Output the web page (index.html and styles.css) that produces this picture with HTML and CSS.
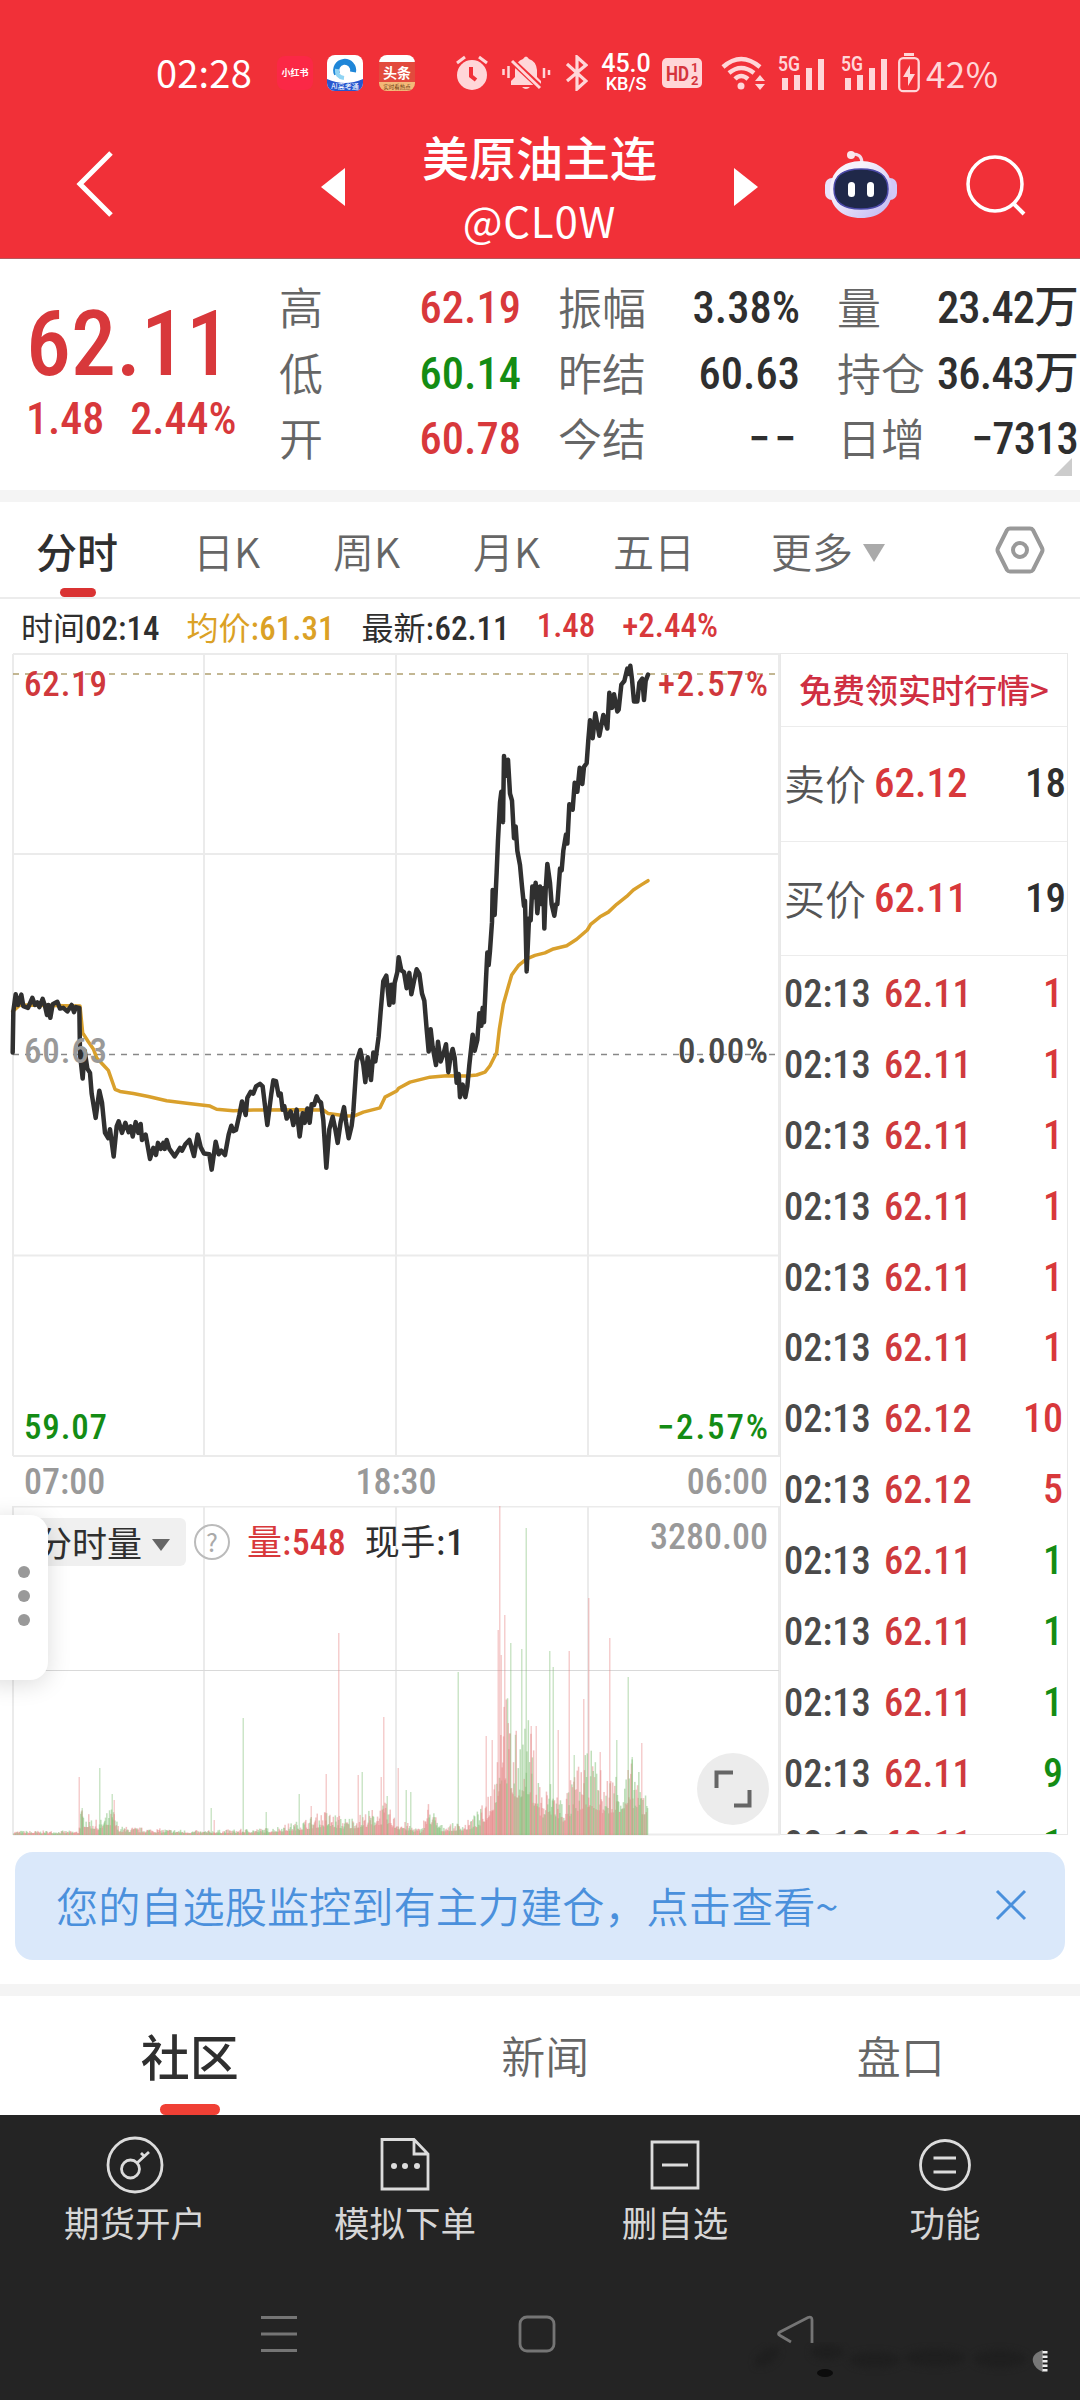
FILE: index.html
```html
<!DOCTYPE html>
<html lang="zh-CN">

<head>
    <meta charset="utf-8" />
    <meta name="viewport" content="width=device-width, initial-scale=1" />
    <title>美原油主连</title>
    <link rel="stylesheet" href="styles.css">
</head>

<body>
    <header class="top">
        <div class="status">
            <span class="clock">02:28</span>
            <span class="app app-xhs">小红书</span>
            <svg class="app-qq" width="36" height="36" viewBox="0 0 36 36">
                <clipPath id="r"><rect width="36" height="36" rx="8" /></clipPath>
                <g clip-path="url(#r)">
                    <rect width="36" height="36" fill="#fff" />
                    <path d="M0 24Q18 32 36 24V36H0Z" fill="#2757cf" />
                    <path d="M10 19A8.500 8.500 0 1 1 26 17" fill="none" stroke="#1f86d8" stroke-width="6" />
                    <path d="M10 14Q9 22 17 23" fill="none" stroke="#8fd4f4" stroke-width="4" />
                    <text x="18" y="34" font-size="7" fill="#fff" text-anchor="middle">AI高考通</text>
                </g>
            </svg>
            <svg class="app-tt" width="36" height="36" viewBox="0 0 36 36">
                <g clip-path="url(#r)">
                    <rect width="36" height="36" fill="#e24a3d" />
                    <rect width="36" height="7" fill="#fff" />
                    <rect y="27" width="36" height="9" fill="#f3b978" />
                    <text x="18" y="23" font-size="14" font-weight="700" fill="#fff" text-anchor="middle">头条</text>
                    <text x="18" y="34" font-size="5.500" fill="#6b3a12" text-anchor="middle">实时看热点</text>
                </g>
            </svg>
            <svg class="alarm" width="32" height="36" viewBox="0 0 32 36">
                <circle cx="16" cy="20" r="15" fill="#ffd6d8" />
                <path d="M1 8L9 2M31 8L23 2" stroke="#ffd6d8" stroke-width="3" />
                <path d="M15 12V21L20 25" fill="none" stroke="#f13038" stroke-width="4" />
            </svg>
            <svg class="bell" width="49" height="36" viewBox="0 0 49 36">
                <path d="M9 30V26L13 22V15Q14 6 21 4Q24 -1 27 4Q34 6 35 15V22L39 26V30ZM20 32H28Q24 36 20 32Z" fill="#ffd6d8" />
                <path d="M9 5L40 34" stroke="#f13038" stroke-width="6" />
                <path d="M10 6L38 33" stroke="#ffd6d8" stroke-width="3" />
                <path d="M1.500 14V20M6.500 11V23M42 13V23M47 15V20" stroke="#ffd6d8" stroke-width="2.500" />
            </svg>
            <svg class="bt" width="22" height="36" viewBox="0 0 22 36">
                <path d="M1 9L20 26L11 34V2L20 10L1 26" fill="none" stroke="#ffd6d8" stroke-width="3.200" />
            </svg>
            <span class="speed"><b>45.0</b><i>KB/S</i></span>
            <svg class="hd" width="40" height="30" viewBox="0 0 40 30">
                <rect width="40" height="30" rx="5" fill="#ffd6d8" />
                <text x="4" y="23" font-size="21" font-weight="700" textLength="23" lengthAdjust="spacingAndGlyphs">HD</text>
                <text x="29" y="14" font-size="13" font-weight="700">1</text>
                <text x="29" y="27" font-size="13" font-weight="700">2</text>
            </svg>
            <svg class="wifi" width="44" height="36" viewBox="0 0 44 36">
                <g fill="none" stroke="#ffd6d8" stroke-width="4.500">
                    <path d="M2 12Q20 -4 39 12" />
                    <path d="M8 18Q20 8 33 18" />
                    <path d="M14 24Q20 18 27 24" />
                </g>
                <circle cx="20" cy="31" r="3.500" fill="#ffd6d8" />
                <path d="M34 26L39 20L44 26ZM34 29L39 35L44 29Z" fill="#ffd6d8" />
            </svg>
            <svg class="sig" width="46" height="40" viewBox="0 -4 46 40">
                <text x="0" y="16" font-size="20" font-weight="600" fill="#ffd6d8" textLength="22" lengthAdjust="spacingAndGlyphs">5G</text>
                <path d="M4 23h6v12h-6zM16 20h6v15h-6zM28 13h6v22h-6zM40 4h6v31h-6z" fill="#ffd6d8" />
            </svg>
            <svg class="sig sig-b" width="46" height="40" viewBox="0 -4 46 40">
                <text x="0" y="16" font-size="20" font-weight="600" fill="#ffd6d8" textLength="22" lengthAdjust="spacingAndGlyphs">5G</text>
                <path d="M4 23h6v12h-6zM16 20h6v15h-6zM28 13h6v22h-6zM40 4h6v31h-6z" fill="#ffd6d8" />
            </svg>
            <svg class="batt" width="22" height="40" viewBox="0 0 22 40">
                <path d="M6 1.500H16" stroke="#ffd6d8" stroke-width="3" />
                <rect x="1.200" y="5.200" width="19.500" height="33" rx="4" fill="none" stroke="#ffd6d8" stroke-width="2.300" />
                <path d="M12 12L5 24H10V33L17 21H12Z" fill="#ffd6d8" />
            </svg>
            <span class="pct">42%</span>
        </div>
        <div class="titlebar">
            <svg class="back" width="38" height="66" viewBox="0 0 38 66">
                <path d="M35 2L4 33L35 64" fill="none" stroke="#fff" stroke-width="5" />
            </svg>
            <svg class="prev" width="24" height="38" viewBox="0 0 24 38"><path d="M24 0V38L0 19Z" fill="#fff" /></svg>
            <div class="title">
                <h1>美原油主连</h1>
                <span>@CL0W</span>
            </div>
            <svg class="next" width="24" height="38" viewBox="0 0 24 38"><path d="M0 0V38L24 19Z" fill="#fff" /></svg>
            <svg class="robot" width="72" height="68" viewBox="0 0 72 68">
                <linearGradient id="hd" x1="0" y1="0" x2="1" y2="1">
                    <stop offset=".3" stop-color="#f6f2fc" />
                    <stop offset="1" stop-color="#bdb4f2" />
                </linearGradient>
                <path d="M26 4Q37 3 37 13" fill="none" stroke="#f3dcea" stroke-width="3" />
                <circle cx="26" cy="5" r="4" fill="#fbe6ec" />
                <rect x="0" y="28" width="14" height="22" rx="7" fill="#e9e2fa" />
                <rect x="58" y="28" width="14" height="22" rx="7" fill="#d2c9f7" />
                <path d="M36 11C54 11 67 22 67 40C67 58 54 68 36 68C18 68 5 58 5 40C5 22 18 11 36 11Z" fill="url(#hd)" />
                <path d="M36 19C54 19 63 25 63 39C63 53 54 59 36 59C18 59 9 53 9 39C9 25 18 19 36 19Z" fill="#1f2849" stroke="#4b49a8" stroke-width="1.500" />
                <rect x="23" y="32" width="7" height="15" rx="3.500" fill="#fff" />
                <rect x="42" y="32" width="7" height="15" rx="3.500" fill="#fff" />
            </svg>
            <svg class="search" width="62" height="62" viewBox="0 0 62 62">
                <circle cx="29" cy="29" r="27" fill="none" stroke="#fff" stroke-width="3.500" />
                <path d="M48 49L58 59" stroke="#fff" stroke-width="4" />
            </svg>
        </div>
    </header>

    <section class="quote">
        <div class="last red">
            <div class="price num">62.11</div>
            <div class="chg"><span class="num">1.48</span><span class="num">2.44%</span></div>
        </div>
        <dl class="col">
            <dt>高</dt><dd class="num red">62.19</dd>
            <dt>低</dt><dd class="num green">60.14</dd>
            <dt>开</dt><dd class="num red">60.78</dd>
        </dl>
        <dl class="col">
            <dt>振幅</dt><dd class="num">3.38%</dd>
            <dt>昨结</dt><dd class="num">60.63</dd>
            <dt>今结</dt><dd class="num dash">−−</dd>
        </dl>
        <dl class="col">
            <dt>量</dt><dd class="num">23.42万</dd>
            <dt>持仓</dt><dd class="num">36.43万</dd>
            <dt>日增</dt><dd class="num">−7313</dd>
        </dl>
        <i class="corner"></i>
    </section>

    <nav class="periods">
        <a class="on">分时</a>
        <a>日K</a>
        <a>周K</a>
        <a>月K</a>
        <a>五日</a>
        <a>更多<i class="caret"></i></a>
        <svg width="50" height="48" viewBox="0 0 50 48">
            <path d="M15 2.500H35Q37 2.500 38 4L47 22Q48 24 47 26L38 44Q37 45.500 35 45.500H15Q13 45.500 12 44L3 26Q2 24 3 22L12 4Q13 2.500 15 2.500Z" fill="none" stroke="#999" stroke-width="4" />
            <circle cx="25" cy="24" r="7" fill="none" stroke="#999" stroke-width="4" />
        </svg>
    </nav>

    <div class="info">
        <span>时间<b class="num">02:14</b></span>
        <span class="gold">均价:<b class="num">61.31</b></span>
        <span>最新:<b class="num">62.11</b></span>
        <span class="red num">1.48</span>
        <span class="red num">+2.44%</span>
    </div>

    <main class="board">
        <div class="charts">
            <svg class="chart" width="780" height="804" viewBox="0 653 780 804">
                <path class="grid" d="M13 654H780M13 854H780M13 1255.500H780M13 1456H780M13 654V1456M204 654V1456M396 654V1456M588 654V1456M779 654V1456" />
                <path class="dashed top-line" d="M13 674H776" />
                <path class="dashed" d="M13 1054.500H776" />
                <g transform="translate(0 640) scale(.33333 .35714)">
                    <polyline id="avg" class="avg" />
                    <polyline id="line" class="line" />
                </g>
                <g class="labels">
                    <text class="red" x="24" y="696" textLength="83">62.19</text>
                    <text class="red" x="658" y="696" textLength="110">+2.57%</text>
                    <text class="gray" x="24" y="1063" textLength="83">60.63</text>
                    <text class="mid" x="678" y="1063" textLength="90">0.00%</text>
                    <text class="green" x="24" y="1439" textLength="83">59.07</text>
                    <text class="green" x="657" y="1439" textLength="111">−2.57%</text>
                </g>
            </svg>
            <div class="axis num"><span>07:00</span><span>18:30</span><span>06:00</span></div>
            <div class="volume">
                <svg width="780" height="330" viewBox="0 1506 780 330">
                    <path class="grid" d="M13 1506.500H780M13 1834.500H780M13 1506V1835M204 1506V1835M396 1506V1835M588 1506V1835M779 1506V1835" />
                    <path d="M13 1670.500H779" stroke="#d9d9d9" />
                    <g id="bars"></g>
                </svg>
                <div class="vol-head">
                    <span class="pick">分时量<i class="caret"></i></span>
                    <span class="help">?</span>
                    <span class="red">量:<b class="num">548</b></span>
                    <span class="hand">现手:<b class="num">1</b></span>
                    <span class="max num">3280.00</span>
                </div>
                <span class="full">
                    <svg width="38" height="38" viewBox="0 0 38 38"><path d="M19 2.500H2.500V18M35.500 20V35.500H20" fill="none" stroke="#666" stroke-width="4" /></svg>
                </span>
            </div>
        </div>
        <aside class="ticks">
            <div class="free">免费领实时行情&gt;</div>
            <div class="bid"><span>卖价</span><b class="num red">62.12</b><b class="num qty">18</b></div>
            <div class="bid"><span>买价</span><b class="num red">62.11</b><b class="num qty">19</b></div>
            <ul class="num">
                <li><span>02:13</span><b>62.11</b><em class="red">1</em></li>
                <li><span>02:13</span><b>62.11</b><em class="red">1</em></li>
                <li><span>02:13</span><b>62.11</b><em class="red">1</em></li>
                <li><span>02:13</span><b>62.11</b><em class="red">1</em></li>
                <li><span>02:13</span><b>62.11</b><em class="red">1</em></li>
                <li><span>02:13</span><b>62.11</b><em class="red">1</em></li>
                <li><span>02:13</span><b>62.12</b><em class="red">10</em></li>
                <li><span>02:13</span><b>62.12</b><em class="red">5</em></li>
                <li><span>02:13</span><b>62.11</b><em class="green">1</em></li>
                <li><span>02:13</span><b>62.11</b><em class="green">1</em></li>
                <li><span>02:13</span><b>62.11</b><em class="green">1</em></li>
                <li><span>02:13</span><b>62.11</b><em class="green">9</em></li>
                <li><span>02:13</span><b>62.11</b><em class="green">1</em></li>
            </ul>
        </aside>
        <div class="drawer"><i></i><i></i><i></i></div>
    </main>

    <div class="banner">
        <span>您的自选股监控到有主力建仓，点击查看~</span>
        <svg width="32" height="32" viewBox="0 0 32 32"><path d="M2 2L30 30M30 2L2 30" stroke="#4a90dc" stroke-width="3" /></svg>
    </div>

    <nav class="sections">
        <a class="on">社区</a>
        <a>新闻</a>
        <a>盘口</a>
    </nav>

    <footer class="bottom">
        <div class="actions">
            <a>
                <svg width="58" height="58" viewBox="0 0 58 58">
                    <circle cx="29" cy="29" r="27" />
                    <circle cx="24.500" cy="33" r="9" />
                    <path d="M31 27L43 16M35 17L39 21" />
                </svg>
                期货开户
            </a>
            <a>
                <svg width="58" height="58" viewBox="0 0 58 58">
                    <path d="M6 3.500H38L52 18V53H6ZM38 3.500V18H52" />
                    <circle class="dot" cx="18" cy="30" r="3" />
                    <circle class="dot" cx="29" cy="30" r="3" />
                    <circle class="dot" cx="41" cy="30" r="3" />
                </svg>
                模拟下单
            </a>
            <a>
                <svg width="58" height="58" viewBox="0 0 58 58"><path d="M6 6H52V52H6ZM16 29H42" /></svg>
                删自选
            </a>
            <a>
                <svg width="58" height="58" viewBox="0 0 58 58">
                    <circle cx="29" cy="29" r="24.500" />
                    <path d="M17.500 22H40M17.500 36H40" />
                </svg>
                功能
            </a>
        </div>
        <div class="sysnav">
            <svg width="38" height="38" viewBox="0 0 38 38"><path d="M1 2.500H37M1 19H37M1 35.500H37" /></svg>
            <svg width="38" height="38" viewBox="0 0 38 38"><rect x="2" y="2" width="34" height="34" rx="7" /></svg>
            <svg width="38" height="38" viewBox="0 0 38 38"><path d="M15 27L4 20.500Q1 19 4 17L32 2.500Q36 1 36 5V28" /></svg>
        </div>
        <svg class="smudge" width="312" height="36" viewBox="0 0 312 36">
            <g class="haze">
                <ellipse cx="22" cy="15" rx="14" ry="7" transform="rotate(-35 22 15)" />
                <ellipse cx="82" cy="10" rx="16" ry="8" />
                <ellipse cx="130" cy="18" rx="26" ry="8" />
                <ellipse cx="190" cy="16" rx="30" ry="9" />
                <ellipse cx="255" cy="17" rx="26" ry="9" />
            </g>
            <ellipse cx="80" cy="31" rx="8" ry="4" fill="#0c0c0c" />
            <path d="M298 8Q286 12 288 20Q290 27 298 30Z" fill="#777" />
            <path d="M300 9V30" stroke="#eee" stroke-width="5" stroke-dasharray="2.500 2" />
        </svg>
    </footer>
    <script src="chart.js"></script>
</body>

</html>
```
FILE: styles.css
```css
* {
    box-sizing: border-box;
}

body {
    margin: 0;
    width: 1080px;
    height: 2400px;
    overflow: hidden;
    background: #fff;
    color: #2f2f2f;
    font-family: "Noto Sans CJK SC", sans-serif;
}

svg {
    display: block;
    flex: none;
}

b, i, em {
    font-weight: inherit;
    font-style: normal;
}

.num {
    font-family: "Roboto Condensed", Roboto, "Noto Sans CJK SC", sans-serif;
    font-weight: 500;
    font-stretch: 75%;
}

.red { color: #d8383b; fill: #d0383c; }
.green { color: #148c14; fill: #148c14; }
.gold { color: #dba125; }

/* header */
.top {
    height: 259px;
    background: #f13038;
    border-bottom: 1px solid #b5595d;
    color: #fff;
}

.status {
    display: flex;
    align-items: center;
    height: 146px;
    padding-left: 156px;
}

.clock {
    width: 121px;
    margin-top: -4px;
    font-size: 38px;
    font-weight: 400;
    letter-spacing: .2px;
    white-space: nowrap;
}

.app-xhs {
    width: 36px;
    height: 34px;
    border-radius: 8px;
    background: #fb2846;
    font-size: 9px;
    font-weight: 700;
    line-height: 34px;
    text-align: center;
}

.app-qq { margin-left: 14px; }
.app-tt { margin-left: 16px; }
.alarm { margin-left: 41px; }
.bell { margin-left: 14px; }
.bt { margin-left: 15px; }

.speed {
    width: 52px;
    margin-left: 12px;
    font-family: Roboto, sans-serif;
    text-align: center;
}

.speed b, .speed i {
    display: block;
    font-size: 25px;
    font-weight: 500;
    line-height: 22px;
}

.speed i {
    font-size: 18px;
    line-height: 18px;
}

.hd { margin-left: 10px; fill: #d5343c; font-family: Roboto, sans-serif; }
.wifi { margin-left: 19px; }
.sig { margin: -4px 0 0 13px; font-family: Roboto, sans-serif; }
.sig-b { margin-left: 17px; }
.batt { margin-left: 11px; }

.pct {
    margin-left: 6px;
    margin-top: -2px;
    font-size: 35px;
    letter-spacing: .4px;
    color: #ffd6d8;
}

.titlebar {
    display: flex;
    align-items: center;
    height: 76px;
    padding-left: 76px;
}

.prev { margin-left: 207px; margin-top: 5px; }

.title {
    width: 389px;
    padding-top: 9px;
    text-align: center;
}

.title h1 {
    margin: 0;
    font-size: 47px;
    font-weight: 500;
    line-height: 62px;
}

.title span {
    display: block;
    font-size: 42px;
    line-height: 66px;
    letter-spacing: .8px;
}

.next { margin-top: 5px; }
.robot { margin-left: 67px; }
.search { margin: 3px 0 0 69px; }

/* quote */
.quote {
    position: relative;
    display: grid;
    grid-template-columns: 216px 242px 242px 241px;
    column-gap: 37px;
    height: 243px;
    padding-left: 26px;
    border-bottom: 12px solid #f4f4f4;
}

.last {
    padding-top: 36px;
}

.price {
    height: 95px;
    font-size: 90px;
    line-height: 100px;
}

.chg {
    display: flex;
    gap: 26px;
    font-size: 44px;
    line-height: 58px;
}

.col {
    display: grid;
    grid-template-columns: auto 1fr;
    grid-auto-rows: 65.500px;
    margin: 17px 0 0;
}

.col dt {
    font-size: 44px;
    line-height: 60px;
    color: #666;
    font-weight: 350;
}

.col dd {
    margin: 0;
    font-size: 44.500px;
    line-height: 65px;
    text-align: right;
    white-space: nowrap;
}

.col:nth-child(4) dd { letter-spacing: -.8px; }
.col .dash { letter-spacing: 4px; }

.corner {
    position: absolute;
    right: 8px;
    bottom: 14px;
    border: solid transparent;
    border-width: 0 0 18px 18px;
    border-bottom-color: #ccc;
}

/* period tabs */
.periods {
    display: flex;
    align-items: center;
    height: 97px;
    padding-left: 36px;
    border-bottom: 2px solid #ececec;
    font-size: 41px;
    font-weight: 350;
    color: #666;
}

.periods a {
    position: relative;
    width: 140px;
    line-height: 90px;
    white-space: nowrap;
}

.periods a.on {
    width: 157px;
    color: #2f2f2f;
    font-weight: 500;
}

.periods a:nth-child(6) { width: 242px; padding-left: 18px; }

.periods a.on::after {
    content: "";
    position: absolute;
    left: 24px;
    bottom: -2px;
    width: 36px;
    height: 9px;
    border-radius: 5px;
    background: #da3333;
}

.caret {
    display: inline-block;
    margin-left: 10px;
    border: 11px solid transparent;
    border-width: 18px 11px 0;
    border-top-color: #aaa;
    vertical-align: 6px;
}

/* info line */
.info {
    display: flex;
    height: 54px;
    padding-left: 21px;
    font-size: 32px;
    line-height: 54px;
    white-space: nowrap;
}

.info span { margin-right: 27px; }
.info .num { font-size: 33px; }

/* charts */
.board {
    position: relative;
    display: flex;
    height: 1183px;
}

.charts { width: 780px; }

.grid { fill: none; stroke: #ebebeb; stroke-width: 2; }
.dashed { fill: none; stroke: #888; stroke-width: 1.600; stroke-dasharray: 6 6; }
.top-line { stroke: #b0a070; }

.line, .avg {
    fill: none;
    stroke: #303030;
    stroke-width: 4.500;
    stroke-linejoin: round;
    stroke-linecap: round;
    vector-effect: non-scaling-stroke;
}

.avg { stroke: #d9a02c; stroke-width: 3.500; }

.labels {
    font: 500 35px "Roboto Condensed", Roboto, sans-serif;
    font-stretch: 75%;
}

.labels .gray { fill: #999; }
.labels .mid { fill: #4a4a4a; }

.axis {
    display: flex;
    justify-content: space-between;
    height: 49px;
    padding: 0 12px 0 24px;
    font-size: 36px;
    line-height: 50px;
    color: #999;
}

.volume {
    position: relative;
    height: 330px;
}

.vol-head {
    position: absolute;
    top: 10px;
    left: 13px;
    right: 12px;
    display: flex;
    align-items: center;
    font-size: 35px;
    line-height: 48px;
    white-space: nowrap;
}

.vol-head .num { font-size: 36px; }

.pick {
    width: 173px;
    padding-left: 24px;
    border-radius: 6px;
    background: #f0f0f0;
}

.pick .caret {
    margin-left: 10px;
    border-width: 12px 9px 0;
    border-top-color: #666;
}

.help {
    width: 36px;
    height: 36px;
    margin: 0 17px 0 8px;
    border: 2.500px solid #bbb;
    border-radius: 50%;
    color: #aaa;
    font-size: 25px;
    line-height: 31px;
    text-align: center;
}

.hand { margin-left: 19px; letter-spacing: .6px; }

.max {
    margin: -10px 0 0 auto;
    color: #999;
}

.full {
    position: absolute;
    right: 11px;
    bottom: 11px;
    display: grid;
    place-items: center;
    width: 72px;
    height: 72px;
    border-radius: 50%;
    background: #ececec;
}

.drawer {
    position: absolute;
    left: -20px;
    top: 862px;
    display: flex;
    flex-direction: column;
    gap: 12px;
    width: 68px;
    height: 165px;
    padding: 51px 0 0 38px;
    border-radius: 18px;
    background: #fff;
    box-shadow: 0 4px 24px rgba(0, 0, 0, .14);
}

.drawer i {
    width: 12px;
    height: 12px;
    border-radius: 50%;
    background: #999;
}

/* tick list */
.ticks {
    width: 288px;
    height: 1182px;
    border: 1px solid #e8e8e8;
    overflow: hidden;
}

.free {
    height: 73px;
    border-bottom: 1px solid #ececec;
    color: #cf2f42;
    font-size: 33px;
    font-weight: 500;
    line-height: 71px;
    padding-left: 18px;
    white-space: nowrap;
}

.bid {
    display: flex;
    height: 114.500px;
    padding: 0 1px 0 3px;
    border-bottom: 1px solid #ececec;
    font-size: 41px;
    line-height: 113px;
}

.bid span {
    width: 90px;
    line-height: 110px;
    font-weight: 350;
    color: #555;
}

.qty { margin-left: auto; }

.ticks ul {
    margin: 0;
    padding: 2px 4px 0 3px;
    list-style: none;
    font-size: 38.500px;
}

.ticks li {
    display: flex;
    height: 70.900px;
    line-height: 71px;
    color: #4a4a4a;
}

.ticks li span { width: 100px; }
.ticks li b { color: #cf3a3d; }
.ticks li em { margin-left: auto; font-size: 40px; }

/* banner */
.banner {
    display: flex;
    align-items: center;
    justify-content: space-between;
    height: 108px;
    margin: 16px 15px 24px 15px;
    padding: 0 38px 3px 41px;
    border-radius: 18px;
    background: #dae8fa;
    color: #4a90dc;
    font-size: 42.200px;
    font-weight: 350;
}

/* lower tabs */
.sections {
    display: flex;
    height: 131px;
    padding-left: 12px;
    border-top: 12px solid #f4f4f4;
    font-size: 44px;
    font-weight: 350;
    line-height: 118px;
    color: #666;
}

.sections a {
    position: relative;
    width: 355.500px;
    text-align: center;
}

.sections a.on {
    color: #2f2f2f;
    font-size: 49px;
    font-weight: 500;
}

.sections a.on::after {
    content: "";
    position: absolute;
    left: 148px;
    bottom: 0;
    width: 60px;
    height: 11px;
    border-radius: 6px;
    background: #f04035;
}

/* bottom bar */
.bottom {
    position: relative;
    height: 285px;
    background: #242424;
    color: #d6d6d6;
}

.actions {
    display: flex;
    height: 200px;
    padding-top: 21px;
}

.actions a {
    display: flex;
    flex-direction: column;
    align-items: center;
    width: 270px;
    font-size: 35.500px;
    line-height: 56px;
}

.actions svg {
    fill: none;
    stroke: #dcdcdc;
    stroke-width: 2.800;
}

.actions .dot { fill: #dcdcdc; stroke: none; }

.sysnav {
    display: flex;
    gap: 220px;
    padding-left: 260px;
}

.sysnav svg {
    fill: none;
    stroke: #757575;
    stroke-width: 2.800;
}

.smudge {
    position: absolute;
    right: 23px;
    bottom: 22px;
}

.haze {
    fill: #1f1f1f;
    filter: blur(3px);
}
```
FILE: chart.js
```javascript
// price and average, y grows downwards
var price = "38,1155 40,1040 47,992 54,1022 64,993 70,1025 84,1030 97,1002 105,1022 112,1015 118,1028 128,1005 135,1025 141,1050 145,1022 151,1058 158,1020 172,1013 180,1032 190,1030 202,1040 215,1022 222,1042 228,1028 238,1030 240,1160 248,1228 254,1150 262,1200 270,1212 275,1270 287,1338 298,1262 306,1295 315,1380 325,1395 330,1370 341,1446 350,1362 356,1348 366,1380 376,1352 386,1378 392,1362 398,1390 407,1350 415,1380 422,1355 426,1400 437,1385 450,1453 460,1422 468,1442 474,1408 482,1425 490,1408 494,1425 500,1400 508,1425 524,1446 540,1422 546,1430 556,1412 568,1400 582,1445 593,1385 602,1420 612,1438 628,1440 635,1483 647,1405 656,1440 664,1430 675,1442 686,1385 694,1360 700,1375 708,1372 718,1330 726,1292 737,1330 742,1282 752,1265 760,1270 768,1250 780,1243 788,1250 802,1358 814,1270 820,1233 828,1235 836,1275 842,1270 848,1315 853,1305 860,1340 872,1320 880,1358 890,1315 899,1390 908,1325 914,1352 922,1312 929,1352 935,1300 942,1302 950,1278 956,1290 963,1295 970,1345 979,1478 988,1370 998,1335 1006,1370 1013,1408 1022,1350 1032,1308 1038,1350 1046,1395 1055,1360 1060,1320 1070,1180 1081,1148 1090,1190 1096,1238 1103,1168 1113,1232 1120,1155 1126,1180 1136,1110 1142,1040 1150,955 1159,940 1168,1022 1174,965 1180,1015 1184,960 1192,930 1196,888 1204,925 1212,930 1220,975 1228,932 1234,992 1242,955 1250,922 1258,935 1266,990 1273,1010 1280,1090 1286,1152 1292,1090 1298,1140 1308,1190 1314,1125 1322,1180 1330,1160 1338,1132 1345,1210 1352,1165 1358,1145 1364,1170 1370,1240 1376,1215 1380,1280 1388,1245 1396,1280 1402,1250 1408,1190 1418,1105 1424,1150 1432,1120 1438,1045 1444,1080 1448,1030 1452,1070 1458,950 1462,875 1466,910 1470,870 1476,790 1478,700 1484,770 1490,650 1494,560 1500,455 1504,425 1509,510 1512,325 1518,380 1524,335 1530,430 1536,450 1542,555 1547,522 1552,590 1560,630 1566,690 1572,745 1575,730 1580,928 1587,780 1592,785 1597,690 1602,720 1607,680 1612,765 1620,690 1626,740 1630,695 1633,808 1637,700 1642,627 1650,680 1655,740 1663,772 1668,740 1672,740 1680,640 1685,645 1690,590 1698,545 1702,570 1708,460 1714,470 1718,475 1724,400 1732,425 1739,358 1747,403 1752,355 1760,345 1765,280 1770,225 1778,275 1786,205 1798,268 1810,210 1822,248 1828,148 1836,190 1842,152 1852,200 1856,195 1864,125 1873,115 1882,80 1888,95 1891,72 1896,110 1902,172 1912,172 1918,120 1927,108 1932,168 1937,115 1944,97";
var avg = "38,1040 60,1022 240,1025 248,1100 265,1125 280,1145 290,1170 310,1190 325,1205 345,1258 360,1264 400,1270 445,1278 500,1290 560,1297 630,1305 650,1314 700,1318 760,1316 900,1315 970,1316 985,1326 1040,1333 1065,1332 1090,1322 1140,1310 1155,1280 1190,1263 1196,1255 1230,1238 1290,1224 1340,1220 1400,1221 1430,1218 1455,1210 1470,1192 1490,1155 1498,1090 1510,1020 1525,970 1535,938 1555,912 1580,893 1605,883 1635,876 1660,865 1700,856 1730,838 1762,812 1772,796 1800,775 1825,762 1850,740 1880,718 1900,700 1925,685 1944,674";
document.getElementById('line').setAttribute('points', price);
document.getElementById('avg').setAttribute('points', avg);

// x, usual height, colour lean (0 green .. 1 red)
var env = [[13, 3, .5], [78, 3, .5], [80, 18, .5], [98, 9, .5], [112, 20, .3], [118, 6, .5], [200, 3, .5], [270, 5, .5], [300, 10, .5], [325, 17, .4], [345, 12, .7], [358, 14, .8], [385, 22, .8], [395, 12, .7], [420, 4, .5], [428, 24, .1], [440, 7, .4], [465, 9, .6], [480, 18, .9], [490, 38, .8], [497, 70, .9], [502, 120, .9], [512, 70, .4], [518, 72, .1], [526, 84, .3], [535, 54, .8], [542, 30, .6], [552, 40, .3], [562, 25, .9], [575, 46, .6], [590, 58, .8], [604, 40, .7], [614, 46, .3], [626, 46, .7], [633, 54, .2], [642, 34, .7], [648, 50, .6]];
var spikes = [[79, 58, 1], [82, 27, 0], [99.500, 67, 0], [112, 41, 0], [114, 35, 1], [211, 27, 0], [214, 15, 1], [243, 117, 0], [266, 23, 0], [299, 41, 0], [311, 29, 1], [326, 61, 1], [338.500, 202, 1], [358, 60, 1], [362, 63, 0], [381, 58, 1], [383.500, 118, 1], [387, 39, 0], [398, 67, 1], [406, 45, 0], [410.500, 43, 0], [458, 163, 0], [486, 99, 1], [492, 95, 1], [498, 205, 1], [499.500, 330, 1], [501, 180, 1], [504.500, 220, 1], [510.500, 192, 0], [521.500, 186, 0], [526, 307, 0], [531, 109, 1], [536, 109, 1], [549.500, 184, 0], [553, 168, 0], [558, 105, 1], [569, 184, 1], [574, 80, 0], [583.500, 136, 1], [588.500, 237, 1], [600, 83, 1], [609.500, 197, 1], [616.500, 95, 0], [628, 158, 0], [632, 78, 0], [641.500, 92, 1]];
var seed = 7, out = "";
function rnd() { seed = (seed * 16807) % 2147483647; return seed / 2147483647; }
function bar(x, h, red, o) {
    out += '<rect x="' + x.toFixed(1) + '" y="' + (1835 - h).toFixed(1) + '" width="1.500" height="' + h.toFixed(1) + '" fill="' + (red ? "#e58585" : "#80bf75") + '" opacity="' + o + '"/>';
}
for (var x = 13, k = 0; x < 647; x += .670) {
    while (k < env.length - 2 && env[k + 1][0] <= x) k++;
    var a = env[k], b = env[k + 1], t = (x - a[0]) / (b[0] - a[0]);
    var h = a[1] + (b[1] - a[1]) * t, r = rnd();
    bar(x, Math.max(1, h * (.5 + r * r)), rnd() < a[2] * .7 + .2, .5);
}
spikes.forEach(function (s) { bar(s[0] - .5, s[1], s[2], .4); });
document.getElementById('bars').innerHTML = out;
```
